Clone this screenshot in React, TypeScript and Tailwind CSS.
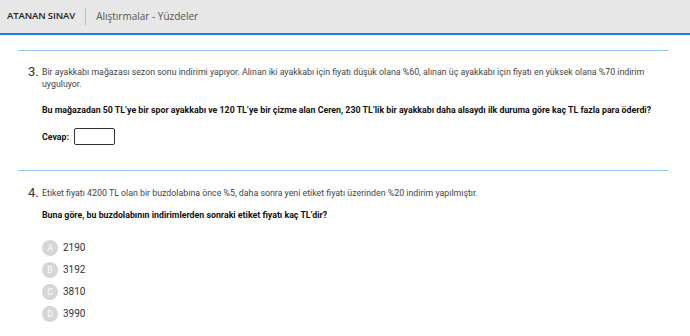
import React from "react"

const options = [
  { key: "A", value: "2190" },
  { key: "B", value: "3192" },
  { key: "C", value: "3810" },
  { key: "D", value: "3990" },
]

const Divider = () => <div className="h-px bg-[#90c4f9]" />

export default function App() {
  return (
    <div className="w-[690px] h-[336px] overflow-hidden bg-white font-['Roboto',sans-serif] text-[#333]">
      <header className="h-[35px] bg-[#e7e7e7] border-b-2 border-b-[#1a7ef0] flex items-center pl-[7px] font-['Open_Sans',sans-serif]">
        <span className="text-[9.5px] font-semibold text-[#222] tracking-[-0.1px]">ATANAN SINAV</span>
        <span className="ml-[10px] mr-[10px] h-[17px] w-px bg-[#bdbdbd]" />
        <span className="text-[10px] text-[#555]">Alıştırmalar - Yüzdeler</span>
      </header>

      <div className="ml-[18px] w-[650px] pt-[15px]">
        <Divider />
        <section className="pt-[15px] pb-[25px]">
          <div className="flex">
            <span className="ml-[10px] w-[14px] text-[13px] leading-[12px] text-[#333]">3.</span>
            <div className="flex-1 text-[8.8px] leading-[12px] text-[#444]">
              <p>
                Bir ayakkabı mağazası sezon sonu indirimi yapıyor. Alınan iki ayakkabı için fiyatı düşük olana %60, alınan üç ayakkabı için fiyatı en yüksek olana %70 indirim uyguluyor.
              </p>
              <p className="mt-[14px] font-bold text-[#111]">
                Bu mağazadan 50 TL’ye bir spor ayakkabı ve 120 TL’ye bir çizme alan Ceren, 230 TL’lik bir ayakkabı daha alsaydı ilk duruma göre kaç TL fazla para öderdi?
              </p>
              <div className="mt-[12px] flex items-center gap-[5px]">
                <span className="font-bold text-[#111]">Cevap:</span>
                <span className="w-[41px] h-[17px] border border-[#333] rounded-[2px]" />
              </div>
            </div>
          </div>
        </section>

        <Divider />
        <section className="pt-[16px]">
          <div className="flex">
            <span className="ml-[10px] w-[14px] text-[13px] leading-[12px] text-[#333]">4.</span>
            <div className="flex-1 text-[8.8px] leading-[12px] text-[#444]">
              <p>
                Etiket fiyatı 4200 TL olan bir buzdolabına önce %5, daha sonra yeni etiket fiyatı üzerinden %20 indirim yapılmıştır.
              </p>
              <p className="mt-[10px] font-bold text-[#111]">
                Buna göre, bu buzdolabının indirimlerden sonraki etiket fiyatı kaç TL’dir?
              </p>
              <ul className="mt-[19px] flex flex-col gap-[6px]">
                {options.map(o => (
                  <li key={o.key} className="flex items-center gap-[5px]">
                    <span className="w-[16px] h-[16px] rounded-full bg-[#d6d6d6] text-white text-[8.5px] flex items-center justify-center">
                      {o.key}
                    </span>
                    <span className="text-[10px] text-[#333]">{o.value}</span>
                  </li>
                ))}
              </ul>
            </div>
          </div>
        </section>
      </div>
    </div>
  )
}
